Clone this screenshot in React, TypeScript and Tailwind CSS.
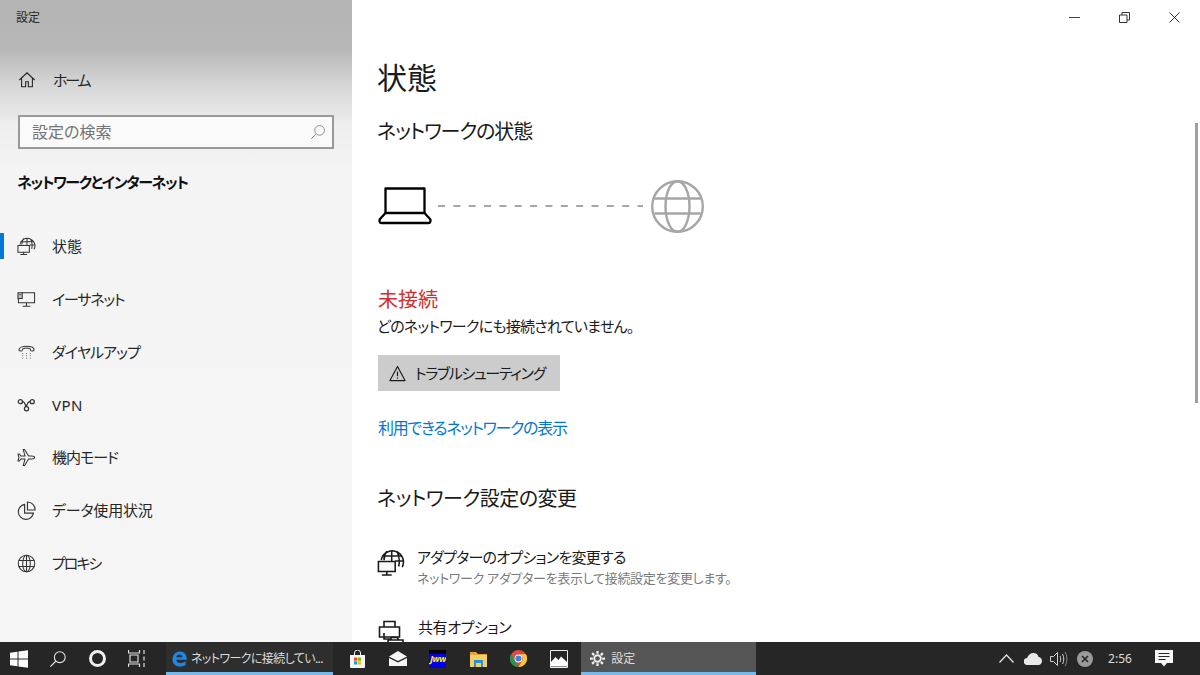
import React from "react";

type IconProps = { className?: string };

// stroke icons, drawn on a 20x20 box
function HomeIcon({ className }: IconProps) {
  return (
    <svg className={className} viewBox="0 0 20 20" fill="none" stroke="currentColor" strokeWidth="1.2">
      <path d="M1.5 10 10 2l8.500 8M4 8v9.500h4.500V12h3v5.500H16V8" />
    </svg>
  );
}

function StatusIcon({ className }: IconProps) {
  return (
    <svg className={className} viewBox="0 0 20 20" fill="none" stroke="currentColor" strokeWidth="1.1">
      <path d="M3 8a8 8 0 1 1 15 5M10.500 1v8M7 1.500C5.500 3.500 5 5.500 5 8M14 1.500c2 3 2.300 7 1.500 11M3.500 5h14M13 8.500h5.500" />
      <path d="M1 9h12v7H1zM7 16v2.500M3.500 18.500h7" fill="#f6f6f6" />
    </svg>
  );
}

function EthernetIcon({ className }: IconProps) {
  return (
    <svg className={className} viewBox="0 0 20 20" fill="none" stroke="currentColor" strokeWidth="1.1">
      <path d="M5 3h13.500v10.500H1.500V9M10 13.500v3.500M6 17h8" />
      <path d="M1 3h4.500v6H1z" fill="currentColor" fillOpacity="0.25" />
      <path d="M2.500 5h1.500" />
    </svg>
  );
}

function DialupIcon({ className }: IconProps) {
  return (
    <svg className={className} viewBox="0 0 20 20" fill="none" stroke="currentColor" strokeWidth="1.1">
      <path d="M2 8.500C2 3 18 3 18 8.500c0 1-3 1.500-3.500.500-.3-.800-.300-1.800-.800-2-2-.800-5.400-.800-7.400 0-.5.200-.5 1.200-.8 2C5 10 2 9.500 2 8.500Z" />
      <path d="M5.500 12h1M9.500 12h1M13.500 12h1M5.500 14.500h1M9.500 14.500h1M13.500 14.500h1M5.500 17h1M9.500 17h1M13.500 17h1" strokeOpacity="0.7" />
    </svg>
  );
}

function VpnIcon({ className }: IconProps) {
  return (
    <svg className={className} viewBox="0 0 20 20" fill="none" stroke="currentColor" strokeWidth="1.3">
      <circle cx="3.500" cy="7" r="2.200" />
      <circle cx="16" cy="7" r="2.200" />
      <circle cx="10" cy="14.500" r="2.200" />
      <path d="M5.700 7c2 0 3 2 3.700 5.500M13.800 7c-1.800 0-3.200 2-3.800 5.500" />
    </svg>
  );
}

function PlaneIcon({ className }: IconProps) {
  return (
    <svg className={className} viewBox="0 0 20 20" fill="none" stroke="currentColor" strokeWidth="1.1" strokeLinejoin="round">
      <path d="M18.500 10c0-1-1-1.500-3-1.500h-3.300L8 1.500H6.500L8.500 8.500H4.200L2.500 6.300H1L2 10l-1 3.700h1.500l1.700-2.200h4.300l-2 7h1.500l4.200-7h3.300c2 0 3-.5 3-1.500Z" />
    </svg>
  );
}

function PieIcon({ className }: IconProps) {
  return (
    <svg className={className} viewBox="0 0 20 20" fill="none" stroke="currentColor" strokeWidth="1.200">
      <path d="M8 3.500a8 8 0 1 0 9.300 9.300H8Z" />
      <path d="M11 1a8 8 0 0 1 8 8.500h-8Z" />
    </svg>
  );
}

function GlobeIcon({ className }: IconProps) {
  return (
    <svg className={className} viewBox="0 0 20 20" fill="none" stroke="currentColor" strokeWidth="1.100">
      <circle cx="10" cy="10" r="8.700" />
      <ellipse cx="10" cy="10" rx="4" ry="8.700" />
      <path d="M10 1.300v17.400M1.800 6.800h16.400M1.800 13.200h16.400" />
    </svg>
  );
}

function BigGlobeIcon({ className }: IconProps) {
  return (
    <svg className={className} viewBox="0 0 53 53" fill="none" stroke="currentColor" strokeWidth="2.400">
      <circle cx="26.500" cy="26.500" r="25.300" />
      <ellipse cx="26.500" cy="26.500" rx="12" ry="25.300" />
      <path d="M3.500 18.500h46M3.500 33.500h46" />
    </svg>
  );
}

function SearchIcon({ className }: IconProps) {
  return (
    <svg className={className} viewBox="0 0 20 20" fill="none" stroke="currentColor" strokeWidth="1.200">
      <circle cx="12" cy="8" r="6" />
      <path d="M7.500 12.500 1.500 18.500" />
    </svg>
  );
}

function LaptopIcon({ className }: IconProps) {
  return (
    <svg className={className} viewBox="0 0 54 38" fill="none" stroke="currentColor" strokeWidth="2.300" strokeLinejoin="round">
      <path d="M7.500 26V1.500h39V26" />
      <path d="M7.500 26h39l5.500 6c1 1.500.5 4-1.500 4h-47c-2 0-2.500-2.500-1.500-4Z" />
    </svg>
  );
}

function WarningIcon({ className }: IconProps) {
  return (
    <svg className={className} viewBox="0 0 18 18" fill="none" stroke="currentColor" strokeWidth="1.200" strokeLinejoin="round">
      <path d="M9 1.500 17 16.500H1Z" />
      <path d="M9 7v5M9 13.300v1.200" />
    </svg>
  );
}

function PrinterIcon({ className }: IconProps) {
  return (
    <svg className={className} viewBox="0 0 26 26" fill="none" stroke="currentColor" strokeWidth="1.600">
      <path d="M6 7V1.500h11V7M1.500 7h20v10h-20ZM6 13v6h8" />
      <path d="M10 20h15v5H10ZM13 20v-2.500h6l2 2.500" fill="#ffffff" />
    </svg>
  );
}

const navItems = [
  { label: "状態", icon: StatusIcon, active: true, spacing: "tracking-[0px]" },
  { label: "イーサネット", icon: EthernetIcon, spacing: "tracking-[-1.2px]" },
  { label: "ダイヤルアップ", icon: DialupIcon, spacing: "tracking-[-0.9px]" },
  { label: "VPN", icon: VpnIcon, spacing: "tracking-[0.5px]" },
  { label: "機内モード", icon: PlaneIcon, spacing: "tracking-[-1px]" },
  { label: "データ使用状況", icon: PieIcon, spacing: "tracking-[-0.2px]" },
  { label: "プロキシ", icon: GlobeIcon, spacing: "tracking-[-2px]" },
];

function Sidebar() {
  return (
    <aside className="w-[352px] shrink-0 h-full bg-[linear-gradient(180deg,#b4b4b4_0px,#b8b8b8_50px,#d6d6d6_85px,#eeeeee_125px,#f4f4f4_170px,#f6f6f6_100%)] text-[#262626]">
      <div className="h-[36px] pl-[16px] flex items-center text-[12px]">設定</div>
      <div className="h-[44px] mt-[22px] pl-[18px] flex items-center">
        <HomeIcon className="w-[18px] h-[18px]" />
        <span className="ml-[17px] text-[15px] tracking-[-2.2px]">ホーム</span>
      </div>
      <div className="mt-[13px] ml-[18px] w-[316px] h-[34px] border-2 border-[#999999] bg-[#fafafa] flex items-center justify-between pl-[12px] pr-[6px]">
        <span className="text-[16px] text-[#757575]">設定の検索</span>
        <SearchIcon className="w-[16px] h-[16px] text-[#8a8a8a]" />
      </div>
      <div className="mt-[21px] pl-[17px] h-[24px] flex items-center text-[15px] font-bold tracking-[-1.4px] text-[#111111]">
        ネットワークとインターネット
      </div>
      <nav className="mt-[26px]">
        {navItems.map((item) => {
          const Icon = item.icon;
          return (
            <div key={item.label} className="h-[52.800px] flex items-center">
              <div className={item.active ? "w-[4px] h-[26px] bg-[#0078d7]" : "w-[4px] h-[26px]"} />
              <Icon className="ml-[13px] w-[19px] h-[19px] text-[#333333]" />
              <span className={`ml-[16px] text-[15px] ${item.spacing}`}>{item.label}</span>
            </div>
          );
        })}
      </nav>
    </aside>
  );
}

function Content() {
  return (
    <main className="flex-1 h-full bg-white flex overflow-hidden">
      <div className="flex-1 pl-[25px]">
        <div className="h-[35px] flex items-center justify-end pr-[15px] text-[#333333]">
          <div className="w-[11px] h-px bg-[#444444]" />
          <svg className="ml-[39px] w-[11px] h-[11px]" viewBox="0 0 11 11" fill="none" stroke="currentColor">
            <path d="M.5 3h7.500v7.500H.5ZM3 3V.5h7.500V8H8" />
          </svg>
          <svg className="ml-[39px] w-[11px] h-[11px]" viewBox="0 0 11 11" fill="none" stroke="currentColor">
            <path d="M.5.5l10 10M10.500.5l-10 10" />
          </svg>
        </div>
        <h1 className="mt-[21px] h-[42px] flex items-center text-[30px] text-[#1a1a1a]">状態</h1>
        <h2 className="mt-[20px] h-[28px] flex items-center text-[20px] tracking-[-1.1px] text-[#1a1a1a]">ネットワークの状態</h2>
        <div className="mt-[33px] h-[54px] flex items-center">
          <LaptopIcon className="ml-[1px] w-[54px] h-[38px] text-black" />
          <svg className="ml-[6px] w-[205px] h-[2px]" viewBox="0 0 205 2">
            <path d="M0 1h205" stroke="#a6a6a6" strokeWidth="2" strokeDasharray="7 8.350" />
          </svg>
          <BigGlobeIcon className="ml-[8px] w-[53px] h-[53px] text-[#a6a6a6]" />
        </div>
        <div className="mt-[53px] ml-[1px] h-[28px] flex items-center text-[20px] text-[#d32f2f]">未接続</div>
        <div className="mt-[2px] h-[20px] flex items-center text-[15px] tracking-[-0.75px] text-[#1a1a1a]">どのネットワークにも接続されていません。</div>
        <button className="mt-[19px] ml-[1px] w-[182px] h-[36px] bg-[#cccccc] flex items-center pl-[11px] text-[15px] tracking-[-1.3px] text-[#1a1a1a]">
          <WarningIcon className="w-[17px] h-[17px]" />
          <span className="ml-[9px]">トラブルシューティング</span>
        </button>
        <div className="mt-[26px] ml-[1px] h-[22px] flex items-center text-[16px] tracking-[-1.3px] text-[#0078d7]">利用できるネットワークの表示</div>
        <h2 className="mt-[46px] h-[28px] flex items-center text-[20px] tracking-[-0.5px] text-[#1a1a1a]">ネットワーク設定の変更</h2>
        <div className="mt-[33px] flex">
          <StatusIcon className="mt-[3px] w-[28px] h-[28px] text-[#1a1a1a]" />
          <div className="ml-[12px]">
            <div className="h-[22px] flex items-center text-[15px] tracking-[-0.75px] text-[#1a1a1a]">アダプターのオプションを変更する</div>
            <div className="h-[22px] flex items-center text-[13px] tracking-[-0.3px] text-[#7a7a7a]">ネットワーク アダプターを表示して接続設定を変更します。</div>
          </div>
        </div>
        <div className="mt-[27px] flex">
          <PrinterIcon className="mt-[3px] ml-[1px] w-[26px] h-[26px] text-[#1a1a1a]" />
          <div className="ml-[14px] h-[20px] flex items-center text-[15px] tracking-[-0.4px] text-[#1a1a1a]">共有オプション</div>
        </div>
      </div>
      <div className="w-[5px] pt-[123px] pr-[2px]">
        <div className="h-[280px] bg-[#a0a0a0]" />
      </div>
    </main>
  );
}

function TaskSlot({ children }: { children: React.ReactNode }) {
  return <div className="w-[40.400px] h-full flex items-center justify-center">{children}</div>;
}

function Taskbar() {
  return (
    <footer className="h-[33px] bg-[#262626] flex items-center text-[#dcdcdc]">
      <div className="w-[38px] h-full flex items-center justify-center">
        <svg className="w-[18px] h-[18px]" viewBox="0 0 18 18" fill="#ffffff">
          <path d="M0 2.800 7.500 1.700v6.800H0ZM8.500 1.600 18 .2v8.300H8.500ZM0 9.500h7.500v6.800L0 15.200ZM8.500 9.500H18v8.300l-9.500-1.400Z" />
        </svg>
      </div>
      <div className="w-[40px] h-full flex items-center justify-center">
        <SearchIcon className="w-[18px] h-[18px] text-[#e6e6e6]" />
      </div>
      <div className="w-[39px] h-full flex items-center justify-center">
        <div className="w-[17px] h-[17px] rounded-full border-[3px] border-[#f0f0f0]" />
      </div>
      <div className="w-[40px] h-full flex items-center justify-center">
        <svg className="w-[18px] h-[17px]" viewBox="0 0 18 17" fill="none" stroke="#e0e0e0" strokeWidth="1.200">
          <path d="M.5 0v3h11V0M2 5h8v7H2ZM.5 17v-3h11v3M16 0v4M16 6.500v4M16 13v4" />
        </svg>
      </div>
      <div className="ml-[9px] w-[167px] h-full flex flex-col bg-[#2e2e2e]">
        <div className="flex-1 flex items-center pl-[6px] pt-[3px]">
          <svg className="w-[15px] h-[16px]" viewBox="0 0 15 16">
            <path
              d="M.5 8C.8 3.500 4 .5 8 .5c4 0 6.800 2.800 6.800 8.300H4.200c.2 2 1.700 3.200 4 3.200 1.800 0 3.500-.5 5.300-1.500v3.800c-1.600.9-3.500 1.300-5.500 1.300-4.500 0-7.500-3-7.500-7.600Zm3.700-1.800h6.200C10.300 4.500 9.300 3.500 7.500 3.500c-1.700 0-3 1-3.300 2.700Z"
              fill="#1e88e5"
            />
          </svg>
          <span className="ml-[4px] text-[12px] tracking-[-0.6px] whitespace-nowrap">ネットワークに接続してい...</span>
        </div>
        <div className="h-[3px] bg-[#76b9ed]" />
      </div>
      <div className="w-[4px]" />
      <TaskSlot>
        <svg className="w-[17px] h-[18px]" viewBox="0 0 17 18">
          <path d="M1 5h15v12a1 1 0 0 1-1 1H2a1 1 0 0 1-1-1Z" fill="#f5f5f5" />
          <path d="M5.500 5V3a3 3 0 0 1 6 0v2" fill="none" stroke="#f5f5f5" />
          <path d="M5 7.500h3.200v3.200H5Z" fill="#f25022" />
          <path d="M8.800 7.500H12v3.200H8.800Z" fill="#7fba00" />
          <path d="M5 11.300h3.200v3.200H5Z" fill="#00a4ef" />
          <path d="M8.800 11.300H12v3.200H8.800Z" fill="#ffb900" />
        </svg>
      </TaskSlot>
      <TaskSlot>
        <svg className="w-[18px] h-[15px]" viewBox="0 0 18 15" fill="#f5f5f5">
          <path d="M0 5.500 9 0l9 5.500L9 10ZM0 7l9 4.500L18 7v8H0Z" />
        </svg>
      </TaskSlot>
      <TaskSlot>
        <div className="w-[17px] h-[18px] bg-[linear-gradient(180deg,#000000_0,#000000_4px,#0000ee_4px,#0000ee_100%)] flex items-center justify-center overflow-hidden">
          <span className="text-[9px] italic font-bold leading-none tracking-[-0.5px] text-[#ffee00]">Jww</span>
        </div>
      </TaskSlot>
      <TaskSlot>
        <svg className="w-[17px] h-[16px]" viewBox="0 0 17 16">
          <path d="M0 1h6l2 2h9v2H0Z" fill="#e8a33d" />
          <path d="M0 4h17v12H0Z" fill="#f6cf62" />
          <path d="M4 9h9v7h-2v-4H6v4H4Z" fill="#2f8fd6" />
        </svg>
      </TaskSlot>
      <TaskSlot>
        <svg className="w-[17px] h-[17px]" viewBox="0 0 24 24">
          <circle cx="12" cy="12" r="12" fill="#dd4b3e" />
          <path d="M12 24A12 12 0 0 1 1.600 6l5.200 9 5 9Z" fill="#1a9c50" />
          <path d="M12 6h10.500A12 12 0 0 1 12 24l5.200-9A6 6 0 0 0 12 6Z" fill="#fcc934" />
          <circle cx="12" cy="12" r="5.500" fill="#ffffff" />
          <circle cx="12" cy="12" r="4.300" fill="#3f7fe8" />
        </svg>
      </TaskSlot>
      <TaskSlot>
        <svg className="w-[18px] h-[18px]" viewBox="0 0 18 18">
          <path d="M.5.500h17v17H.5Z" fill="#262626" stroke="#f0f0f0" />
          <path d="M1 16.500V12l4.500-5 3 3 2.500-3.500L17 12v4.500Z" fill="#ffffff" />
        </svg>
      </TaskSlot>
      <div className="ml-[2px] w-[175px] h-full flex flex-col bg-[#555555]">
        <div className="flex-1 flex items-center pl-[9px] pt-[3px]">
          <svg className="w-[15px] h-[15px]" viewBox="0 0 16 16" fill="none" stroke="#f0f0f0">
            <circle cx="8" cy="8" r="3.500" strokeWidth="2" />
            <path d="M8 0v3M8 13v3M0 8h3M13 8h3M2.300 2.300l2.100 2.100M11.600 11.600l2.100 2.100M2.300 13.700l2.100-2.100M11.600 4.400l2.100-2.100" strokeWidth="2.400" />
          </svg>
          <span className="ml-[6px] text-[12px]">設定</span>
        </div>
        <div className="h-[3px] bg-[#76b9ed]" />
      </div>
      <div className="ml-auto flex items-center h-full pr-[27px]">
        <svg className="w-[15px] h-[9px]" viewBox="0 0 15 9" fill="none" stroke="#e6e6e6" strokeWidth="1.200">
          <path d="M.5 8.500 7.500 1l7 7.500" />
        </svg>
        <svg className="ml-[10px] w-[18px] h-[12px]" viewBox="0 0 18 12" fill="#e8e8e8">
          <path d="M3.500 12a3.500 3.500 0 0 1-.5-7C4 2 6.500 0 9.500 0c2.500 0 4.500 1.500 5 4 2 0 3.500 1.800 3.500 4s-1.500 4-3.500 4Z" />
        </svg>
        <svg className="ml-[8px] w-[18px] h-[16px]" viewBox="0 0 18 16" fill="none" stroke="#d0d0d0">
          <path d="M.5 5.500h3l4-4v13l-4-4h-3ZM10 5c1 1.800 1 4.200 0 6M12.500 3c1.700 3 1.700 7 0 10" />
          <path d="M15 1c2.500 4 2.500 10 0 14" stroke="#8a8a8a" />
        </svg>
        <svg className="ml-[9px] w-[16px] h-[16px]" viewBox="0 0 16 16">
          <circle cx="8" cy="8" r="8" fill="#9a9a9a" />
          <path d="M5 5l6 6M11 5l-6 6" stroke="#262626" strokeWidth="1.600" />
        </svg>
        <span className="ml-[15px] w-[24px] text-[12px] text-center">2:56</span>
        <svg className="ml-[23px] w-[18px] h-[17px]" viewBox="0 0 18 17">
          <path d="M0 0h18v13h-6l-3 3.500L6 13H0Z" fill="#f5f5f5" />
          <path d="M3.500 3.500h11M3.500 6.500h11M3.500 9.500h7" stroke="#262626" />
        </svg>
      </div>
    </footer>
  );
}

export default function App() {
  return (
    <div className="w-[1200px] h-[675px] overflow-hidden flex flex-col font-['Noto_Sans','Noto_Sans_CJK_JP',sans-serif] [font-feature-settings:'palt']">
      <div className="h-[642px] flex">
        <Sidebar />
        <Content />
      </div>
      <Taskbar />
    </div>
  );
}
